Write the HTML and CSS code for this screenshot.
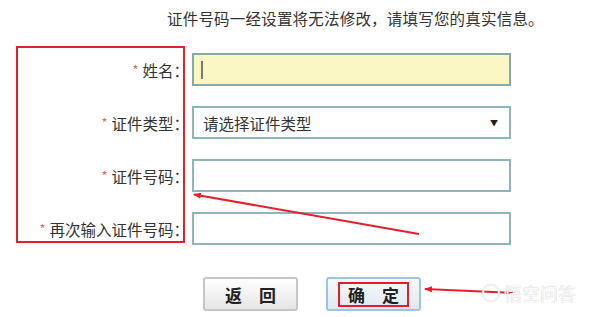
FILE: index.html
```html
<!DOCTYPE html>
<html lang="zh-CN">
<head>
    <meta charset="UTF-8">
    <title>实名认证</title>
    <link rel="stylesheet" href="styles.css">
</head>
<body>
    <div class="page">
        <p class="notice">证件号码一经设置将无法修改，请填写您的真实信息。</p>

        <div class="form">
            <label class="label"><span class="star">*</span>姓名：</label>
            <div class="field field-active"><span class="caret"></span></div>

            <label class="label"><span class="star">*</span>证件类型：</label>
            <div class="field select">
                <span>请选择证件类型</span>
                <span class="arrow">▼</span>
            </div>

            <label class="label"><span class="star">*</span>证件号码：</label>
            <div class="field"></div>

            <label class="label"><span class="star">*</span>再次输入证件号码：</label>
            <div class="field"></div>
        </div>

        <div class="buttons">
            <button class="btn">返　回</button>
            <button class="btn btn-ok"><span class="ok-text">确　定</span></button>
        </div>

        <!-- annotations drawn over the screenshot -->
        <div class="mark-box"></div>
        <svg class="marks" width="600" height="317" viewBox="0 0 600 317">
            <defs>
                <marker id="head" markerWidth="8" markerHeight="6" refX="7" refY="3" orient="auto" markerUnits="userSpaceOnUse">
                    <path d="M0,0 L8,3 L0,6 Z" fill="#e3202a"/>
                </marker>
            </defs>
            <line x1="419" y1="234" x2="194" y2="194.5" stroke="#e3202a" stroke-width="2" marker-end="url(#head)"/>
            <line x1="515" y1="293" x2="425" y2="289" stroke="#e3202a" stroke-width="2" marker-end="url(#head)"/>
        </svg>
        <div class="watermark"><span class="wm-logo"></span>悟空问答</div>
    </div>
</body>
</html>
```

FILE: styles.css
```css
body {
    margin: 0;
    background: #fff;
    font-family: "Noto Sans CJK SC", "Noto Sans", sans-serif;
    color: #333;
}
.page {
    position: relative;
    width: 600px;
    height: 317px;
    overflow: hidden;
}
.notice {
    margin: 0;
    padding: 8px 0 0 167px;
    font-size: 15.5px;
    line-height: 20px;
    letter-spacing: 0.2px;
}
.form {
    display: grid;
    grid-template-columns: 192px 319px;
    grid-auto-rows: 33px;
    row-gap: 20px;
    margin-top: 25px;
}
.label {
    display: flex;
    align-items: center;
    justify-content: flex-end;
    padding-right: 3px;
    font-size: 15.5px;
}
.star {
    color: #e06a6a;
    font-size: 13px;
    margin-right: 4px;
}
.field {
    box-sizing: border-box;
    border: 2px solid #8db5bb;
    background: #fff;
    display: flex;
    align-items: center;
    padding: 0 9px;
}
.field-active {
    background: #faf7c5;
    border-color: #86aaa8;
    padding-left: 7px;
}
.caret {
    display: inline-block;
    width: 2px;
    height: 18px;
    background: #7a7a6a;
}
.select {
    justify-content: space-between;
    font-size: 15.5px;
}
.arrow {
    font-size: 8px;
    color: #222;
    margin-right: 2px;
}
.buttons {
    display: flex;
    gap: 28px;
    margin: 32px 0 0 203px;
}
.btn {
    width: 95px;
    height: 34px;
    border: 2px solid #c6c6c6;
    border-radius: 3px;
    background: linear-gradient(#ffffff, #e6e6e6);
    font-family: "Noto Sans CJK SC", sans-serif;
    font-size: 17px;
    font-weight: bold;
    color: #222;
    padding: 0;
}
.btn-ok {
    border-color: #9cc6e0;
    background: linear-gradient(#f7fafc, #e2e8ee);
}
.ok-text {
    display: inline-block;
    border: 2px solid #e3202a;
    padding: 1px 8px;
    line-height: 19px;
}
.mark-box {
    position: absolute;
    left: 16px;
    top: 46px;
    width: 165px;
    height: 193px;
    border: 2px solid #e3202a;
}
.marks {
    position: absolute;
    left: 0;
    top: 0;
}
.watermark {
    position: absolute;
    left: 482px;
    top: 280px;
    display: flex;
    align-items: center;
    gap: 4px;
    font-size: 18px;
    color: #fafafa;
    text-shadow: 0 0 1px #b8b8b8;
}
.wm-logo {
    display: inline-block;
    width: 14px;
    height: 14px;
    border-radius: 50%;
    border: 2px solid #f2f2f2;
    box-shadow: 0 0 1px #b8b8b8;
}
```
